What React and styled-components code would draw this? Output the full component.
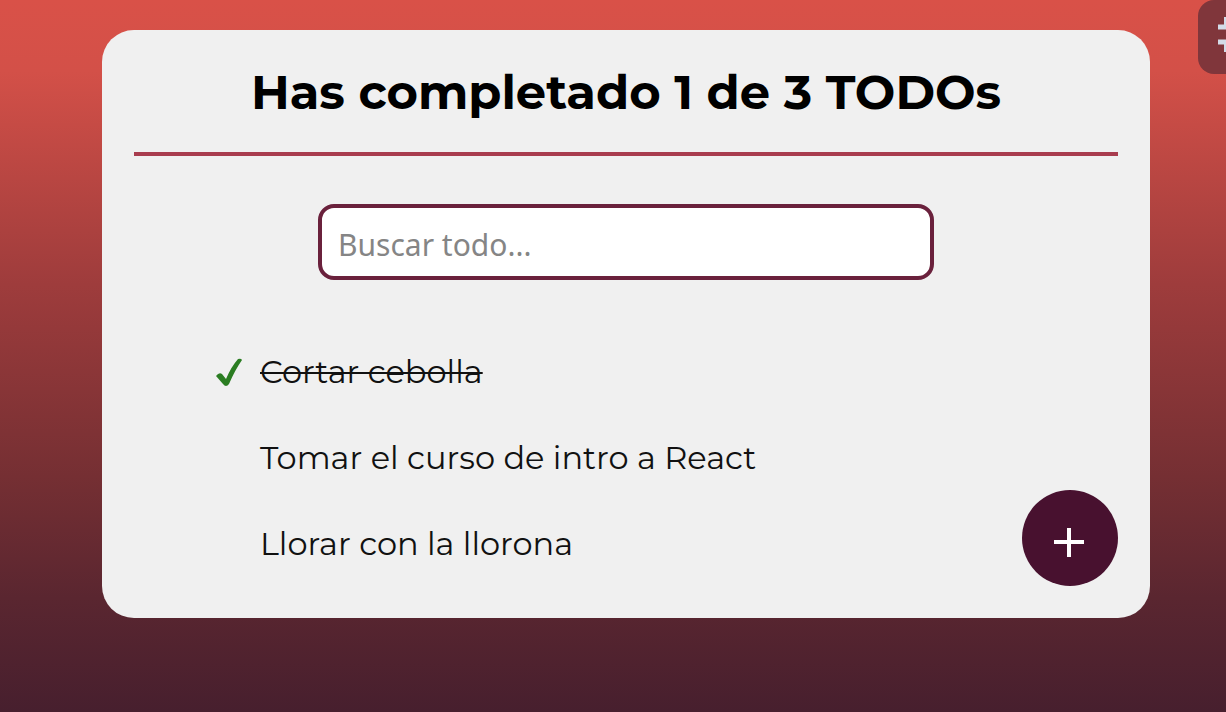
import React from 'react';
import styled, { createGlobalStyle } from 'styled-components';

const Global = createGlobalStyle`
  * { box-sizing: border-box; }
  html, body, #root { height: 100%; }
  body {
    margin: 0;
    font-family: Montserrat, "Open Sans", sans-serif;
    color: #111;
  }
`;

const Page = styled.div`
  position: relative;
  min-height: 100%;
  padding: 30px 76px 94px 102px;
  overflow: hidden;
  background: linear-gradient(180deg, #d95148 0%, #d35048 10%, #9e3c3c 40%, #752f33 67%, #5a2630 84%, #471f2e 100%);
`;

const Card = styled.main`
  position: relative;
  padding: 32px 32px 52px;
  border-radius: 32px;
  background: #f0f0f0;
`;

const Title = styled.h1`
  margin: 0;
  padding-bottom: 30px;
  border-bottom: 4px solid #a83c4e;
  font-size: 48px;
  line-height: 60px;
  font-weight: 700;
  text-align: center;
  color: #000;
`;

const Search = styled.input`
  display: block;
  width: 616px;
  max-width: 100%;
  height: 76px;
  margin: 48px auto 0;
  padding: 4px 16px 0;
  border: 4px solid #6a213c;
  border-radius: 16px;
  background: #fff;
  font-family: "Noto Sans", sans-serif;
  font-size: 30px;
  &::placeholder { color: #858585; opacity: 1; }
`;

const List = styled.ul`
  margin: 68px 0 0;
  padding: 0 80px;
  list-style: none;
`;

const Item = styled.li`
  display: flex;
  align-items: center;
  gap: 14px;
  min-height: 46px;
  margin-bottom: 40px;
  font-size: 32px;
  &:last-child { margin-bottom: 0; }
`;

const Mark = styled.span`
  display: flex;
  flex: 0 0 32px;
`;

const Label = styled.span`
  text-decoration: ${(p) => (p.$done ? 'line-through' : 'none')};
  text-decoration-thickness: 2px;
`;

const AddButton = styled.button`
  position: absolute;
  right: 32px;
  bottom: 32px;
  display: grid;
  place-items: center;
  width: 96px;
  height: 96px;
  padding: 0;
  border: 0;
  border-radius: 50%;
  background: #48112f;
`;

const Tab = styled.button`
  position: absolute;
  top: 0;
  right: 0;
  width: 28px;
  height: 74px;
  padding: 0;
  border: 0;
  border-radius: 16px 0 0 16px;
  background: #80363b;
`;

const todos = [
  { text: 'Cortar cebolla', done: true },
  { text: 'Tomar el curso de intro a React', done: false },
  { text: 'Llorar con la llorona', done: false },
];

export default function App() {
  return (
    <Page>
      <Global />
      <Card>
        <Title>Has completado 1 de 3 TODOs</Title>
        <Search aria-label="Buscar todo" placeholder="Buscar todo..." />
        <List>
          {todos.map((t) => (
            <Item key={t.text}>
              <Mark>
                {t.done && (
                  <svg width="32" height="32" viewBox="0 0 32 32" aria-hidden="true">
                    <path d="M2 21 Q5 17 8 19 L12 24 Q17 12 24 4 Q27 3 28 5 Q21 15 15 29 Q12 33 9 29 Z" fill="#2b7d22" />
                  </svg>
                )}
              </Mark>
              <Label $done={t.done}>{t.text}</Label>
            </Item>
          ))}
        </List>
        <AddButton aria-label="Agregar">
          <svg width="96" height="96" viewBox="0 0 96 96" aria-hidden="true">
            <path d="M47 38V67M32 52H62" fill="none" stroke="#fff" strokeWidth="4" />
          </svg>
        </AddButton>
      </Card>
      <Tab aria-label="Menú">
        <svg width="28" height="74" viewBox="0 0 28 74" aria-hidden="true">
          <path d="M20 27H28M20 42H28" fill="none" stroke="#d3dce8" strokeWidth="5" />
          <path d="M27 17V25M27 44V52" fill="none" stroke="#d3dce8" strokeWidth="2" />
        </svg>
      </Tab>
    </Page>
  );
}
